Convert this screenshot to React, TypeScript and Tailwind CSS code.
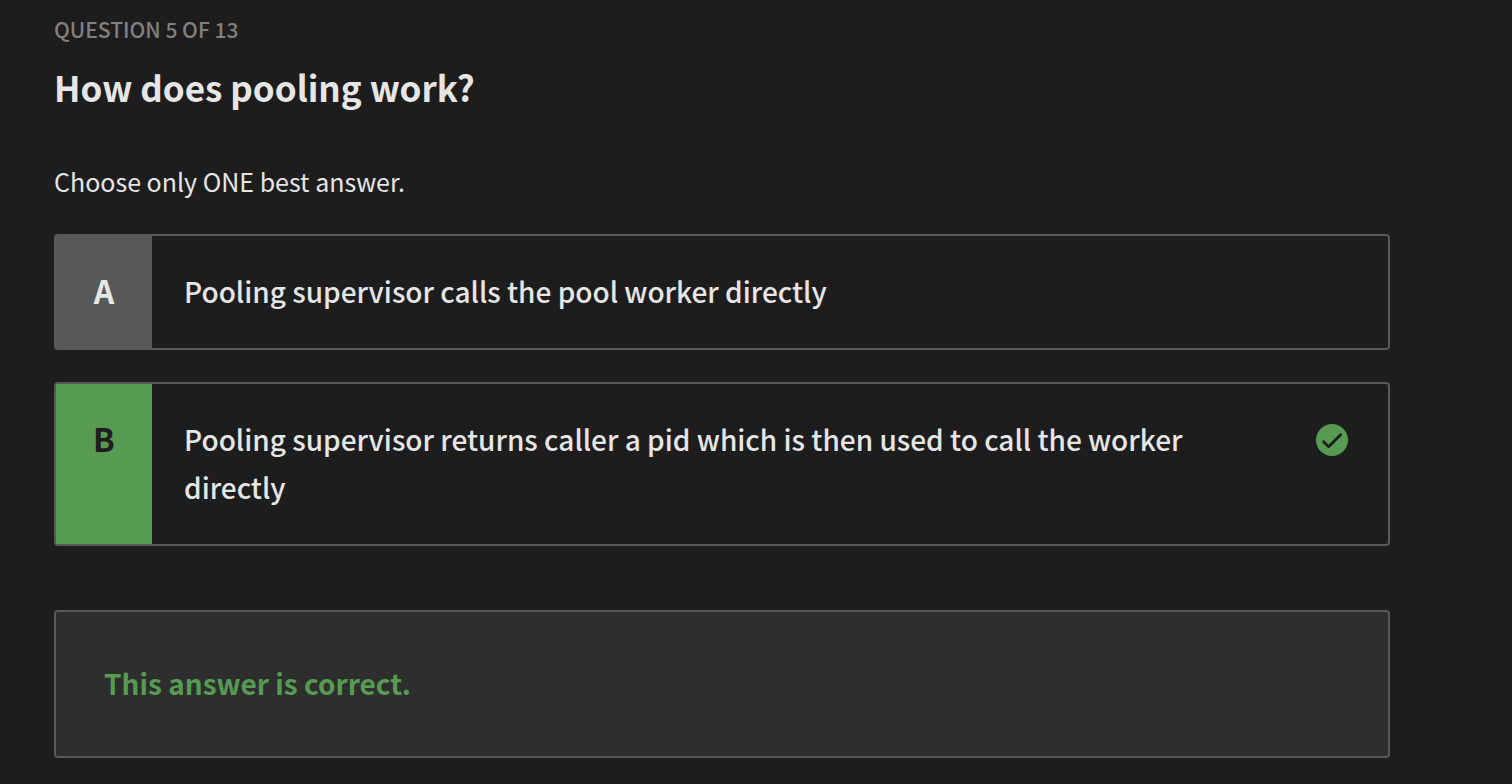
import React from "react";

type Option = { letter: string; text: string; correct?: boolean };

const options: Option[] = [
  { letter: "A", text: "Pooling supervisor calls the pool worker directly" },
  {
    letter: "B",
    text: "Pooling supervisor returns caller a pid which is then used to call the worker directly",
    correct: true,
  },
];

function CheckBadge() {
  return (
    <svg viewBox="0 0 32 32" className="size-8 shrink-0" role="img" aria-label="Correct">
      <circle cx="16" cy="16" r="16" fill="#579b53" />
      <path
        d="M7.6 17.8l5 5L24.6 10.8"
        fill="none"
        stroke="#1d1d1d"
        strokeWidth="2.8"
        strokeLinecap="round"
        strokeLinejoin="round"
      />
    </svg>
  );
}

function AnswerOption({ letter, text, correct }: Option) {
  return (
    <button
      type="button"
      className="flex w-full items-stretch rounded-sm border-2 border-[#585858] text-left"
    >
      <span
        className={
          correct
            ? "w-24 shrink-0 bg-[#579b53] pt-[30px] pb-[34px] text-center text-[32px] leading-12 font-bold text-[#1d1d1d]"
            : "w-24 shrink-0 bg-[#585858] pt-[30px] pb-[34px] text-center text-[32px] leading-12 font-bold text-[#e6e6e6]"
        }
      >
        {letter}
      </span>
      <span className="flex-1 px-8 pt-[31px] pb-[33px] text-[28px] leading-12 font-medium">{text}</span>
      <span className="flex w-32 shrink-0 justify-end py-10 pr-10">{correct && <CheckBadge />}</span>
    </button>
  );
}

export default function App() {
  return (
    <main className="min-h-screen bg-[#1d1d1d] pt-[11px] pr-[122px] pb-6 pl-[54px] font-['Noto_Sans_CJK_SC',sans-serif] text-[#e6e6e6]">
      <p className="text-[21px] leading-9 font-medium text-[#808080]">QUESTION 5 OF 13</p>
      <h1 className="mt-4 text-[35px] leading-12 font-bold">How does pooling work?</h1>
      <p className="mt-13 text-[25px] leading-9">Choose only ONE best answer.</p>
      <div className="mt-[35px] flex flex-col gap-8">
        {options.map((option) => (
          <AnswerOption key={option.letter} {...option} />
        ))}
      </div>
      <section className="mt-16 rounded-sm border-2 border-[#585858] bg-[#2e2e2e] px-12 pt-[47px] pb-[49px]">
        <p className="text-[28px] leading-12 font-bold text-[#579b53]">This answer is correct.</p>
      </section>
    </main>
  );
}
